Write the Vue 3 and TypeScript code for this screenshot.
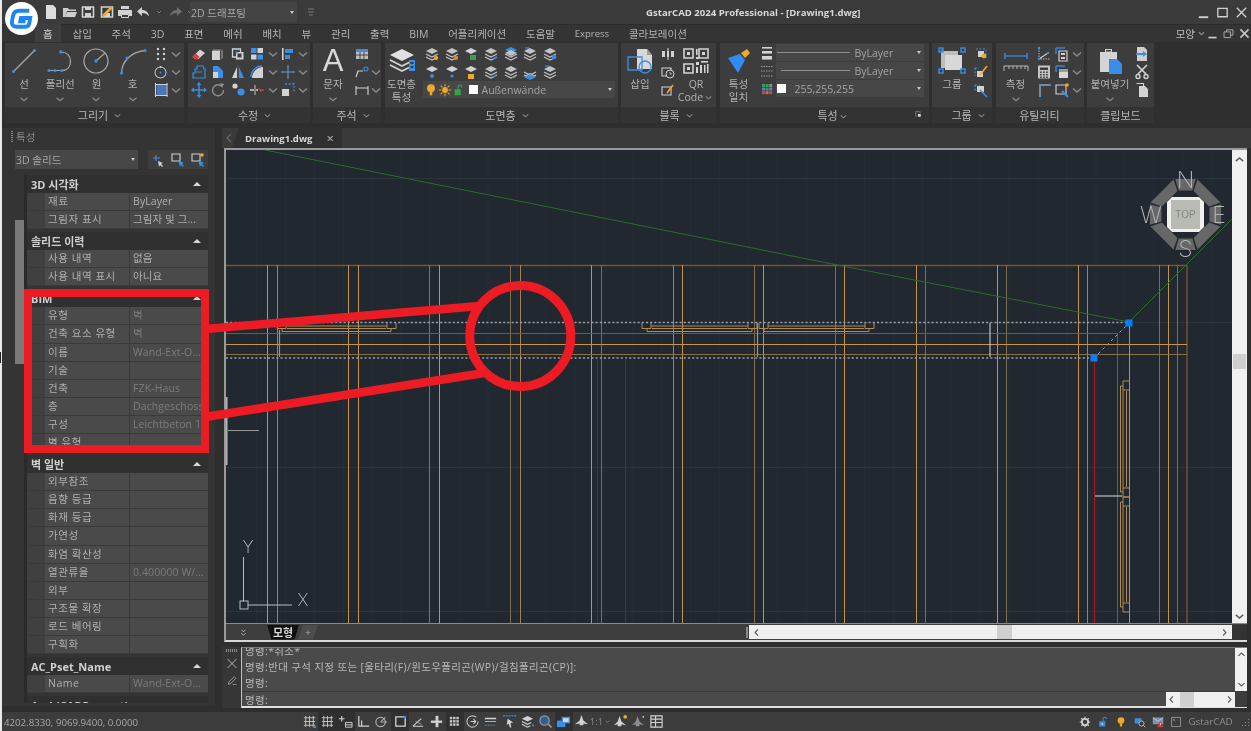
<template>
  <div class="app">
    <!-- title bar -->
    <div class="titlebar">
      <div class="quick">
        <svg v-for="(n, i) in quickIcons" :key="i" class="ico" :class="{ small: n === 'chevs' }" viewBox="0 0 16 16" v-html="ic[n]"></svg>
      </div>
      <div class="workspace"><span>2D 드래프팅</span><i class="tri"></i></div>
      <svg class="ico custom" viewBox="0 0 16 16" v-html="ic.custom"></svg>
      <div class="title">GstarCAD 2024 Professional - [Drawing1.dwg]</div>
      <div class="winbtns">
        <svg viewBox="0 0 16 16" v-html="ic.wmin"></svg>
        <svg viewBox="0 0 16 16" v-html="ic.wmax"></svg>
        <svg viewBox="0 0 16 16" v-html="ic.wclose"></svg>
      </div>
    </div>

    <!-- ribbon tabs -->
    <div class="tabs">
      <span v-for="(t, i) in tabs" :key="t" class="tab" :class="{ on: i === 0 }">{{ t }}</span>
      <div class="tabs-right">
        <span class="style-name">모양<svg class="mini" viewBox="0 0 16 16" v-html="ic.chevs"></svg></span>
        <svg viewBox="0 0 16 16" v-html="ic.wmin"></svg>
        <svg viewBox="0 0 16 16" v-html="ic.wrestore"></svg>
        <svg viewBox="0 0 16 16" v-html="ic.wclose2"></svg>
      </div>
    </div>

    <!-- ribbon -->
    <div class="ribbon">
      <section class="panel p-draw">
        <div class="body">
          <div v-for="b in drawTools" :key="b.label" class="big w36">
            <svg class="bigico" viewBox="0 0 28 28" v-html="ic[b.icon]"></svg>
            <span class="lbl">{{ b.label }}</span>
            <svg class="chev" viewBox="0 0 16 16" v-html="ic.chev"></svg>
          </div>
          <div class="grid cols-draw">
            <svg v-for="(n, i) in drawSmall" :key="i" class="ico" viewBox="0 0 16 16" v-html="ic[n]"></svg>
          </div>
        </div>
        <div class="cap">그리기<svg class="mini" viewBox="0 0 16 16" v-html="ic.chev"></svg></div>
      </section>

      <section class="panel p-mod">
        <div class="body">
          <div class="grid cols-mod">
            <svg v-for="(n, i) in modifyIcons" :key="i" class="ico" viewBox="0 0 16 16" v-html="ic[n]"></svg>
          </div>
        </div>
        <div class="cap">수정<svg class="mini" viewBox="0 0 16 16" v-html="ic.chev"></svg></div>
      </section>

      <section class="panel p-note">
        <div class="body">
          <div class="big w40">
            <span class="big-a">A</span>
            <span class="lbl">문자</span>
            <svg class="chev" viewBox="0 0 16 16" v-html="ic.chev"></svg>
          </div>
          <div class="grid cols-note">
            <svg v-for="(n, i) in noteIcons" :key="i" class="ico" viewBox="0 0 16 16" v-html="ic[n]"></svg>
          </div>
        </div>
        <div class="cap">주석<svg class="mini" viewBox="0 0 16 16" v-html="ic.chev"></svg></div>
      </section>

      <section class="panel p-layer">
        <div class="body">
          <div class="big w34">
            <svg class="bigico" viewBox="0 0 28 28" v-html="ic.layers"></svg>
            <span class="lbl">도면층<br />특성</span>
          </div>
          <div class="layer-right">
            <div class="grid cols-layer">
              <svg v-for="(n, i) in layerIcons" :key="i" class="ico" viewBox="0 0 16 16" v-html="ic[n]"></svg>
            </div>
            <div class="drop layer-drop">
              <svg class="ico" viewBox="0 0 16 16" v-html="ic.bulb"></svg>
              <svg class="ico" viewBox="0 0 16 16" v-html="ic.sun"></svg>
              <svg class="ico" viewBox="0 0 16 16" v-html="ic.lockg"></svg>
              <i class="swatch"></i>
              <span>Außenwände</span>
              <i class="tri"></i>
            </div>
          </div>
        </div>
        <div class="cap">도면층<svg class="mini" viewBox="0 0 16 16" v-html="ic.chev"></svg></div>
      </section>

      <section class="panel p-block">
        <div class="body">
          <div class="big w38">
            <svg class="bigico" viewBox="0 0 28 28" v-html="ic.insert"></svg>
            <span class="lbl">삽입</span>
          </div>
          <div class="grid cols-one">
            <svg v-for="n in blockIcons" :key="n" class="ico" viewBox="0 0 16 16" v-html="ic[n]"></svg>
          </div>
          <div class="big w38">
            <svg class="bigico" viewBox="0 0 28 28" v-html="ic.qr"></svg>
            <span class="lbl">QR<br />Code<svg class="mini" viewBox="0 0 16 16" v-html="ic.chev"></svg></span>
          </div>
        </div>
        <div class="cap">블록<svg class="mini" viewBox="0 0 16 16" v-html="ic.chev"></svg></div>
      </section>

      <section class="panel p-prop">
        <div class="body">
          <div class="big w38">
            <svg class="bigico" viewBox="0 0 28 28" v-html="ic.brush"></svg>
            <span class="lbl">특성<br />일치</span>
          </div>
          <div class="prop-rows">
            <div class="prop-row">
              <svg class="ico" viewBox="0 0 16 16" v-html="ic.lineweight"></svg>
              <div class="drop prop-drop"><i class="bar"></i><span>ByLayer</span><i class="tri"></i></div>
            </div>
            <div class="prop-row">
              <svg class="ico" viewBox="0 0 16 16" v-html="ic.linetype"></svg>
              <div class="drop prop-drop"><i class="bar short"></i><span>ByLayer</span><i class="tri"></i></div>
            </div>
            <div class="prop-row">
              <svg class="ico" viewBox="0 0 16 16" v-html="ic.palette"></svg>
              <div class="drop prop-drop">
                <i class="swatch"></i><span class="rgb">255,255,255</span><i class="tri"></i>
              </div>
            </div>
          </div>
        </div>
        <div class="cap cap-launch">
          <span>특성<svg class="mini" viewBox="0 0 16 16" v-html="ic.chev"></svg></span>
          <svg class="launch" viewBox="0 0 16 16" v-html="ic.launch"></svg>
        </div>
      </section>

      <section class="panel p-group">
        <div class="body">
          <div class="big w40">
            <svg class="bigico" viewBox="0 0 28 28" v-html="ic.group"></svg>
            <span class="lbl">그룹</span>
          </div>
          <div class="grid cols-one">
            <svg v-for="n in groupIcons" :key="n" class="ico" viewBox="0 0 16 16" v-html="ic[n]"></svg>
          </div>
        </div>
        <div class="cap">그룹<svg class="mini" viewBox="0 0 16 16" v-html="ic.chev"></svg></div>
      </section>

      <section class="panel p-util">
        <div class="body">
          <div class="big w40">
            <svg class="bigico" viewBox="0 0 28 28" v-html="ic.measure"></svg>
            <span class="lbl">측정</span>
            <svg class="chev" viewBox="0 0 16 16" v-html="ic.chev"></svg>
          </div>
          <div class="grid cols-util">
            <svg v-for="(n, i) in utilIcons" :key="i" class="ico" viewBox="0 0 16 16" v-html="ic[n]"></svg>
          </div>
        </div>
        <div class="cap plain">유틸리티</div>
      </section>

      <section class="panel p-clip">
        <div class="body">
          <div class="big w46">
            <svg class="bigico" viewBox="0 0 28 28" v-html="ic.paste"></svg>
            <span class="lbl">붙여넣기</span>
            <svg class="chev" viewBox="0 0 16 16" v-html="ic.chev"></svg>
          </div>
          <div class="grid cols-one">
            <svg v-for="n in clipIcons" :key="n" class="ico" viewBox="0 0 16 16" v-html="ic[n]"></svg>
          </div>
        </div>
        <div class="cap plain">클립보드</div>
      </section>
    </div>

    <!-- main area -->
    <div class="main">
      <aside class="palette">
        <div class="pal-head"><i class="grip"></i>특성</div>
        <div class="pal-select">
          <div class="drop sel"><span>3D 솔리드</span><i class="tri"></i></div>
          <div class="sel-btns">
            <svg v-for="n in selIcons" :key="n" class="ico" viewBox="0 0 16 16" v-html="ic[n]"></svg>
          </div>
        </div>
        <div class="pal-body">
          <div class="pal-scroll"><i></i></div>
          <div class="sections">
            <div v-for="s in sections" :key="s.title" class="sec">
              <div class="sec-head"><b>{{ s.title }}</b><i class="tri up"></i></div>
              <div v-for="r in s.rows" :key="r[0]" class="row">
                <span class="gut"></span>
                <span class="name">{{ r[0] }}</span>
                <span class="val" :class="{ lit: s.lit }">{{ r[1] }}</span>
              </div>
            </div>
          </div>
        </div>
      </aside>

      <div class="doc">
        <div class="doc-tabs">
          <svg class="back" viewBox="0 0 8 12"><path d="M6 2 2 6l4 4" fill="none" stroke="#666" stroke-width="1.2" /></svg>
          <div class="doc-tab"><b>Drawing1.dwg</b><span class="x">×</span></div>
        </div>

        <div class="frame">
          <div class="view">
            <svg class="drawing" viewBox="226 150 1006 473" width="1006" height="473">
              <rect x="226" y="150" width="1006" height="473" fill="#212830" />
              <path v-for="x in gridX" :key="'gx' + x" :d="`M${x} 150V623`" stroke="#262d37" stroke-width="1" />
              <path v-for="y in gridY" :key="'gy' + y" :d="`M226 ${y}H1232`" stroke="#2c343e" stroke-width="1" />

              <path d="M226 265.5H1187M1187 265V623" stroke="#80502c" stroke-width="1.4" fill="none" />
              <path v-for="l in uprights" :key="l[0]" :d="`M${l[0]} 265V623`" :stroke="l[1]" stroke-width="1" />

              <path d="M226 333.5H1117.5V623" stroke="#5c605c" stroke-width="1" fill="none" />
              <path d="M226 344.5H1187" stroke="#c49650" stroke-width="1" />
              <path d="M226 354.5H1187" stroke="#8a7048" stroke-width="1" />

              <path v-for="d in windowPaths" :key="d" :d="d" stroke="#b08c52" stroke-width="1" fill="none" />

              <path d="M226 322.5H1129M226 358H1094" stroke="#9aa0a8" stroke-width="1.3" stroke-dasharray="2 2.2" />
              <path d="M279.5 330V357M757.5 323V357" stroke="#8c96a2" stroke-width="1.2" />
              <path d="M990 323V357" stroke="#dcdcdc" stroke-width="1" />
              <path d="M597.5 358V623M625.5 358V623" stroke="#7c1d20" stroke-width="1" />
              <path d="M1094.5 358V623" stroke="#a81c1c" stroke-width="1" />
              <path d="M1129.5 323V623" stroke="#8f97a1" stroke-width="1" />
              <path d="M1095 496H1122" stroke="#dcdcdc" stroke-width="1" />

              <path d="M265 150 812 260 1129 322 1232 219" stroke="#2f6a2c" stroke-width="1" fill="none" />
              <path d="M1094 358 1129 323" stroke="#a0a0a0" stroke-width="1" stroke-dasharray="3 3" />
              <rect x="1125.5" y="319.5" width="7" height="7" fill="#0a7dff" />
              <rect x="1090.5" y="354.5" width="7" height="7" fill="#0a7dff" />

              <rect x="226" y="397" width="1.5" height="68" fill="#b4b4b4" />
              <path d="M228 430.5H259" stroke="#999" stroke-width="1" />

              <!-- ucs -->
              <path d="M243.5 557V601M248 605H292" stroke="#b8bcc0" stroke-width="1" fill="none" />
              <rect x="240" y="601" width="8" height="8" fill="none" stroke="#b8bcc0" stroke-width="1" />
              <text x="248" y="553" class="ucs">Y</text>
              <text x="303" y="606" class="ucs">X</text>

              <!-- view cube -->
              <polygon v-for="(pts, i) in cubeRing" :key="i" :points="pts" fill="#666867" />
              <polygon points="1172,197 1199,197 1204,202 1204,227 1199,232 1172,232 1167,227 1167,202" fill="#f0f0ec" />
              <rect x="1171" y="200" width="29" height="29" fill="#b8bab4" />
              <text x="1185.5" y="218" class="top">TOP</text>
              <text x="1185.5" y="188" class="card">N</text>
              <text x="1185.5" y="257" class="card">S</text>
              <text x="1151" y="223" class="card">W</text>
              <text x="1219" y="223" class="card">E</text>
            </svg>
            <div class="vscroll">
              <svg viewBox="0 0 16 16" v-html="ic.up"></svg>
              <i class="vthumb"></i>
              <svg viewBox="0 0 16 16" v-html="ic.down"></svg>
            </div>
          </div>

          <div class="layoutbar">
            <svg class="dbl" viewBox="0 0 16 16" v-html="ic.dbl"></svg>
            <span class="model">모형</span>
            <span class="plus">+</span>
            <i class="hgrip"></i>
            <div class="hscroll">
              <svg viewBox="0 0 16 16" v-html="ic.left"></svg>
              <i class="hthumb"></i>
              <svg viewBox="0 0 16 16" v-html="ic.right"></svg>
            </div>
            <i class="corner"></i>
          </div>
        </div>

        <div class="cmd">
          <div class="cmd-side">
            <i class="cmd-grip"></i>
            <svg viewBox="0 0 16 16" v-html="ic.cmdx"></svg>
            <svg viewBox="0 0 16 16" v-html="ic.pen"></svg>
          </div>
          <div class="cmd-box">
            <div class="cmd-log">
              <div class="cmd-lines">
                <div>명령:*취소*</div>
                <div>명령:반대 구석 지정 또는 [울타리(F)/윈도우폴리곤(WP)/걸침폴리곤(CP)]:</div>
                <div>명령:</div>
              </div>
              <div class="cmd-vs">
                <svg viewBox="0 0 16 16" v-html="ic.up"></svg>
                <svg viewBox="0 0 16 16" v-html="ic.down"></svg>
              </div>
            </div>
            <div class="cmd-input">
              <span>명령:</span>
              <div class="cmd-hs">
                <svg viewBox="0 0 16 16" v-html="ic.left"></svg>
                <i></i>
                <svg viewBox="0 0 16 16" v-html="ic.right"></svg>
              </div>
              <i class="cmd-corner"></i>
            </div>
          </div>
        </div>
      </div>
    </div>

    <!-- status bar -->
    <div class="status">
      <span class="coords">4202.8330, 9069.9400, 0.0000</span>
      <div class="st-icons">
        <span v-for="(s, i) in statusIcons" :key="i" class="st" :class="{ dark: s.dark, txt: s.text }">
          <template v-if="s.text">1:1<svg class="mini" viewBox="0 0 16 16" v-html="ic.chevs"></svg></template>
          <svg v-else viewBox="0 0 16 16" v-html="ic[s.icon as string]"></svg>
        </span>
      </div>
      <div class="st-right">
        <svg v-for="n in statusRight" :key="n" viewBox="0 0 16 16" v-html="ic[n]"></svg>
        <span>GstarCAD</span>
        <svg class="resize" viewBox="0 0 10 10"><path d="M8 2h1v1H8zM5 5h1v1H5zM8 5h1v1H8zM2 8h1v1H2zM5 8h1v1H5zM8 8h1v1H8z" fill="#8a8a8a" /></svg>
      </div>
    </div>

    <!-- logo over title bar and tabs -->
    <div class="logo">
      <svg viewBox="0 0 34 34">
        <path d="M25 9H14.5C11 9 9 11 8.3 14L7.2 20C6.6 23.5 8.4 25.5 11.6 25.5H20.5C23 25.5 24.6 24 25 22L26 16.5H16.5L15.8 20H21.2" fill="none" stroke="#1e86f0" stroke-width="4" />
      </svg>
    </div>

    <i class="edge-mark"></i>

    <!-- red callout drawn on top of the screenshot -->
    <svg class="callout" viewBox="0 0 1251 731" width="1251" height="731">
      <rect x="28" y="293" width="177" height="156" fill="none" stroke="#ed1c24" stroke-width="8" />
      <path d="M205 329 480 306M205 417 484 373" stroke="#ed1c24" stroke-width="8.5" fill="none" />
      <circle cx="520.3" cy="336" r="50.5" fill="none" stroke="#ed1c24" stroke-width="9" />
    </svg>
  </div>
</template>

<script setup lang="ts">
const W = "#d2d2d2";
const B = "#3a8ee6";
const Y = "#f0a92c";

const s = (d: string, c = W, w = 1.3) => `<path d="${d}" fill="none" stroke="${c}" stroke-width="${w}"/>`;
const f = (d: string, c = W) => `<path d="${d}" fill="${c}"/>`;
const dot = (x: number, y: number, r = 1.5, c = B) => `<circle cx="${x}" cy="${y}" r="${r}" fill="${c}"/>`;
const box = (x: number, y: number, w: number, h: number, c = W) =>
  `<rect x="${x}" y="${y}" width="${w}" height="${h}" fill="${c}"/>`;

const stack = (c = W) =>
  f("M8 2 14 5 8 8 2 5z", c) + s("M2 8l6 3 6-3M2 11l6 3 6-3", c, 1.2);

const ic: Record<string, string> = {
  // quick access
  doc: f("M3 1h7l3 3v11H3z", "#dcdcdc"),
  open: f("M1 4h5l1 1.5h7V7H5l-2 6H1z", "#cfcfcf") + f("M5 8h10l-2 5H3z", "#cfcfcf"),
  save: s("M2.5 3h11v10h-11z", W, 1.6) + box(5, 3, 6, 3) + box(5, 9, 6, 4),
  saveas: s("M2.5 3h11v10h-11z", W, 1.6) + box(5, 9, 6, 4) + s("M4 12 13 3", Y, 2.6),
  print: box(4, 2, 8, 3) + box(1, 6, 14, 6) + box(4, 10, 8, 4, "#3a3a3a") + s("M4.5 10.5h7v3h-7z", W, 1),
  undo: f("M6 3 1 7.5 6 12V9c3 0 5 .8 7 3.5C12.5 8.5 10 6 6 6z"),
  redo: f("M10 3l5 4.5L10 12V9c-3 0-5 .8-7 3.5C3.5 8.5 6 6 10 6z", "#6e6e6e"),
  chevs: s("M5 6.5 8 9.5 11 6.5", "#8a8a8a", 1.5),
  custom: s("M5 5h6M5 8h6", "#777", 1) + s("M6 11h4", "#777", 1),
  wmin: box(3, 12, 10, 2, "#d0d0d0"),
  wmax: s("M3 3.5h10v9H3z", "#d0d0d0", 1.4),
  wclose: s("M3 3 13 13M13 3 3 13", "#d0d0d0", 1.4),
  wclose2: s("M3 3 13 13M13 3 3 13", "#c4c4c4", 2),
  wrestore: s("M2.5 6h8v7h-8zM5.5 6V3.5h8V10h-3", "#a8a8a8", 1.2),
  chev: s("M4 6.5 8 10 12 6.5", "#8a8a8a", 1.5),
  // draw
  line: s("M3.5 24.5 24.5 3.5", "#a8a8a8", 1.2) + dot(3.5, 24.5, 1.6) + dot(24.5, 3.5, 1.6),
  poly: s("M3 23.5H16C22 23.5 24.5 19 24.5 14S21 5 15 5", "#a8a8a8", 1.2) + dot(3, 23.5, 1.6) + dot(9, 23.5, 1.6) + dot(16, 23.5, 1.6) + dot(15, 5, 1.8),
  circle: `<circle cx="14" cy="14" r="12" fill="none" stroke="#a8a8a8" stroke-width="1.2"/>` + s("M14 14 23 6", "#a8a8a8", 1.2) + dot(14, 14, 1.7),
  arc: s("M2.5 26C3 14 12 5 26 3.5", "#a8a8a8", 1.3) + dot(2.5, 26, 1.6) + dot(8, 11, 1.6) + dot(26, 3.5, 1.6),
  dots: [3, 8, 13].map((y) => dot(5, y, 1.2, W) + dot(11, y, 1.2, W)).join(""),
  circdot: `<circle cx="7.5" cy="8.5" r="5.5" fill="none" stroke="#bdbdbd" stroke-width="1.1"/>` + dot(7.5, 8.5, 1) + dot(7.5, 3, 1, W) + dot(13, 8.5, 1.2),
  hatch: box(3.5, 3, 10, 10, "#4778bf") + s("M2 2.5h12.5M2 13.5h12.5M2.5 1v14M14 1v14", W, 1),
  // modify
  eraser: f("M1.5 11 9 3.5l5 3.5-6.5 6H5z") + f("M1.5 11 5 7.5 8.5 11 6 13.5H4z", "#e23b3b"),
  solid: f("M2 5h8v9H2z") + f("M3 3.5h9L10 5H2z", "#8a8a8a") + f("M11 5l2-1.5v8L11 14z", "#777"),
  copyo: s("M2.5 3h8v8h-8z", W, 1.3) + box(6, 6, 7.5, 7.5, W) + box(7.5, 7.5, 4, 4, "#3c3c3c") + box(5.5, 5.5, 2, 2, B),
  four: box(2, 2, 5.5, 5, B) + box(8.5, 2, 5.5, 5, W) + box(2, 8.5, 5.5, 5, W) + box(8.5, 8.5, 5.5, 5, B),
  align: box(2, 2, 1.6, 12) + box(5, 3, 8, 4, B) + box(5, 9, 5, 4, B),
  stretch: s("M2 14V9h2V5h2V2h6l1 3h1v9zM5 8h6", B, 1.2),
  shape: f("M3 2h5l5 5v7H3z", B) + f("M3 8h5v6H3z", W),
  mirror: f("M7 3v11H2z", W) + f("M9 3v11h5z", B) + s("M8 1v14", "#666", .7),
  fillet: f("M14 3v11H3c0-6 5-11 11-11z") + s("M2 13C2 7 7 2 13 2", B, 1.3),
  trim: s("M8 1v14M1 8h14", "#888", 1) + dot(8, 8, 1.3) + dot(8, 3, 1) + dot(8, 13, 1) + dot(3, 8, 1) + dot(13, 8, 1),
  move: s("M8 1v14M1 8h14", B, 1.5) + f("M8 0 10.5 3h-5zM8 16l2.5-3h-5zM0 8l3-2.5v5zM16 8l-3-2.5v5z", B),
  rotate: s("M12 4.5A5.5 5.5 0 1 0 13.5 8", "#8e8e8e", 1.4) + f("M10 1l4 1-2 4z", "#8e8e8e"),
  scale: dot(5, 4, 2.6, W) + dot(11, 10, 3.6),
  brk: s("M1 8h4M7 8h2", W, 1.3) + s("M11 8h4", "#d04a4a", 1.3) + s("M6 3v10", W, .9) + s("M9.5 6l3 4", "#d04a4a", .9),
  dashbox: box(2, 7, 7, 7) + s("M5 2h9v9", B, 1.3).replace("/>", ' stroke-dasharray="2 1.6"/>'),
  // annotation
  table: box(2, 3, 12, 10, "#bfbfbf") + box(2, 3, 12, 3, B) + s("M2 9h12M6 6v7M10 6v7", "#3c3c3c", .9),
  leader: s("M2 13 4 7h5", W, 1.2) + `<circle cx="12" cy="5" r="2" fill="none" stroke="${B}" stroke-width="1.2"/>`,
  dim: s("M2 4v9M14 4v9M2 6h12", W, 1.1),
  blank: "",
  layers: f("M14 2 26 8 14 14 2 8z", "#e0e0e0") + s("M2 13l12 6 8-4M2 18l12 6 7-3.5", W, 1.8) + box(21, 13, 6, 11, B) + box(22.5, 15, 3, 2, "#3c3c3c") + box(22.5, 19, 3, 2, "#3c3c3c"),
  // layers small
  l1: stack("#c2c2c2") + dot(12, 12, 2, Y),
  l2: stack("#c2c2c2") + dot(12, 12, 2, "#e08a2a"),
  l3: f("M8 2 14 5 8 8 2 5z") + box(7, 9, 6, 5, "#37a04a"),
  l4: stack("#c2c2c2") + s("M10 13l4-2", B, 1.4),
  l5: f("M8 1 14 4 8 7 2 4z", B) + stack("#c2c2c2").replace("M8 2 14 5 8 8 2 5z", "M8 4 14 7 8 10 2 7z"),
  l6: s("M3 2h4", B, 1.2) + stack("#c2c2c2"),
  l7: stack("#c2c2c2") + dot(12, 11, 2.3),
  l8: f("M8 2 14 5 8 8 2 5z") + dot(8, 12, 2),
  l9: f("M8 2 14 5 8 8 2 5z") + dot(8, 12, 1.6),
  l10: f("M8 2 14 5 8 8 2 5z") + box(5, 10, 6, 5, Y),
  l11: stack("#c2c2c2") + s("M10 13l3-2", B, 1.3),
  l12: stack("#c2c2c2") + s("M9 14l4-1", "#37a04a", 1.2),
  l13: stack("#c2c2c2").replace("M8 2 14 5 8 8 2 5z", "M8 9 14 12 8 15 2 12z") + f("M8 10 14 13 8 16 2 13z", B),
  l14: s("M3 2h4", B, 1.2) + stack("#c2c2c2"),
  bulb: dot(8, 6, 4.5, Y) + box(6.5, 10, 3, 4, Y),
  sun: dot(8, 8, 3.3, Y) + s("M8 1v3M8 12v3M1 8h3M12 8h3M3 3l2 2M11 11l2 2M3 13l2-2M11 5l2-2", Y, 1.2),
  lockg: box(3, 7, 7, 7, "#37a04a") + s("M7 7V4c0-2 4-2 4 0v1", "#37a04a", 1.3),
  // block
  insert: f("M11 2h10l5 6v14H11z", "#d8d8d8") + f("M21 2l5 6h-5z", "#9c9c9c") + s("M2 10h14v13H2z", B, 1.3) + `<circle cx="19" cy="20" r="6" fill="none" stroke="${B}" stroke-width="1.3"/>`,
  bk1: s("M8 2v12", W, 1) + box(2, 5, 3, 6) + box(11, 5, 3, 6) + box(7, 5, 2, 6),
  bk2: s("M2 4h9v8H2z", W, 1.1) + `<circle cx="10" cy="10" r="4" fill="#3c3c3c" stroke="${W}" stroke-width="1"/>` + s("M10 8v2h2", W, .8),
  bk3: s("M2 5h9v8H2z", W, 1.1) + s("M7 11 13 3", Y, 1.5),
  qr: s("M2 2h9v9H2zM17 2h9v9h-9zM2 17h9v9H2z", W, 1.6) + box(5, 5, 3, 3) + box(20, 5, 3, 3) + box(5, 20, 3, 3) + box(14, 2, 1.6, 6) + box(14, 10, 3, 2) + box(19, 14, 7, 1.6) + box(14, 15, 3, 3) + box(14, 20, 2, 6) + box(18, 18, 2, 8) + box(22, 18, 1.5, 8) + box(25, 17, 1.5, 9),
  // properties
  brush: f("M16 6l6-4 3 4-5 5z", Y) + f("M3 11l12-4 5 6-7 13z", "#2f8cf2"),
  lineweight: box(3, 2, 10, 1.6) + box(3, 6, 10, 2.6) + box(3, 11, 10, 3.6),
  linetype: s("M2 3.5h12M2 8h12M2 13h12", "#9c9c9c", 1.1).replace("/>", ' stroke-dasharray="1.5 1"/>'),
  palette: [0, 1, 2].map((r) => [0, 1, 2].map((c) => box(3 + c * 3.6, 3 + r * 3.6, 3, 3, [["#3f9a55", "#3f9a55", "#8a8a8a"], ["#5b7fd0", "#3f9a55", "#5b7fd0"], ["#c94a4a", "#d06a6a", "#c94a4a"]][r][c])).join("")).join(""),
  launch: s("M3 3h8v2M3 3v8h2", "#a8a8a8", 1) + box(7, 7, 5, 5, "#d8d8d8"),
  // group
  group: box(3, 4, 17, 17, "#bdbdbd") + box(7, 8, 17, 15, "#d8d8d8") + s("M3 3h3M3 3v3", B, 1) + [[3, 3], [25, 3], [3, 24], [25, 24]].map(([x, y]) => `<rect x="${x - 2}" y="${y - 2}" width="4" height="4" fill="none" stroke="${B}" stroke-width="1.4"/>`).join(""),
  gr1: s("M3 3h10v9", B, 1).replace("/>", ' stroke-dasharray="2 1.5"/>') + box(5, 5, 6, 6) + dot(11, 10, 2.4, Y),
  gr2: s("M2 4h4M2 4v8", B, 1.2).replace("/>", ' stroke-dasharray="2 1.5"/>') + box(4, 7, 6, 6) + s("M7 11 14 2", Y, 1.6),
  gr3: s("M2 3h5M2 3v6", B, 1.2).replace("/>", ' stroke-dasharray="2 1.5"/>') + box(4, 4, 7, 6) + s("M7 8l7 7", B, 1.6),
  // utility
  measure: s("M3 6v6M25 6v6", B, 1.4) + s("M3 9h22", B, 1.2) + s("M2 19h24M2 19v5M26 19v5M7 19v3M11 19v3M15 19v3M19 19v3M23 19v3", "#b8b8b8", 1),
  angle: s("M3 2v11h11", "#b8b8b8", 1).replace("/>", ' stroke-dasharray="1.5 1"/>') + s("M3 13 12 7", W, 1.1) + dot(3, 13, 1.3) + dot(3, 2, 1.2) + dot(12, 7, 1.2),
  listbox: s("M2 2h9", B, 1.3) + s("M2 2v6", B, 1.3) + s("M5 5h8v10H5z", W, 1.2) + box(7, 7, 4, 2) + box(7, 11, 4, 2),
  calc: box(2, 1.5, 12, 13, "#c4c4c4") + box(4, 3.5, 8, 2.5, "#3c3c3c") + [7.5, 10, 12.5].map((y) => box(4, y, 1.8, 1.4, "#3c3c3c") + box(7, y, 1.8, 1.4, "#3c3c3c") + box(10, y, 1.8, 1.4, "#3c3c3c")).join(""),
  area: s("M2 2h9", B, 1.3) + s("M2 2v6", B, 1.3) + box(5, 5, 9, 9, "#d8d8d8") + box(5, 5, 9, 3, "#9c9c9c"),
  radius: s("M4 14V3h10", W, 1) + dot(4, 14, 1.3) + dot(4, 3, 1.2) + dot(14, 3, 1.2),
  qselect: s("M2 3h10v9H2z", W, 1.1) + dot(13, 3, 1.8, Y) + s("M8 9l6 6", B, 2),
  // clipboard
  paste: box(4, 5, 17, 20, "#d4d4d4") + box(9, 2, 7, 5, "#d4d4d4") + box(10, 3, 5, 1.5, "#3c3c3c") + f("M13 12h8l5 5v10H13z", "#3a8ee6"),
  clip1: f("M3 1h7l3 3v11H3z", "#cfcfcf") + s("M2 8h9", B, 2) + f("M9 5l4 3-4 3z", B),
  cut: s("M3 1l9 9M13 1l-9 9", W, 1.7) + `<circle cx="4" cy="12.5" r="2" fill="none" stroke="${W}" stroke-width="1.4"/><circle cx="12" cy="12.5" r="2" fill="none" stroke="${W}" stroke-width="1.4"/>`,
  cpy: s("M2.5 1.5h7v11", W, 1.2) + f("M5 4h6l3 3v8H5z"),
  // palette select buttons
  sel1: s("M3 6h7M6 3v6", B, 1.2) + f("M8 9l5 2-2 1 2 2-1 1-2-2-1 2z"),
  sel2: s("M2 2h8v7H2z", W, 1.1) + f("M8 8l6 3-2 1 2 2-1 1-2-2-1 2z", B),
  sel3: s("M2 2h8v7H2z", W, 1.1) + dot(12, 3, 1.8, Y) + f("M8 8l6 3-2 1 2 2-1 1-2-2-1 2z", B),
  // scroll
  up: s("M3.5 10 8 6l4.5 4", "#5c5c5c", 1.8),
  down: s("M3.5 6 8 10l4.5-4", "#5c5c5c", 1.8),
  left: s("M10 3.5 6 8l4 4.5", "#5c5c5c", 1.8),
  right: s("M6 3.5 10 8l-4 4.5", "#5c5c5c", 1.8),
  dbl: s("M5 4 8 7l3-3M5 9l3 3 3-3", "#c8c8c8", 1.2),
  cmdx: s("M2 2 14 14M14 2 2 14", "#bdbdbd", 1.2),
  pen: s("M3 13 4 9.5 11 3l2 2-6.5 7z", "#a8a8a8", 1.1) + box(9, 13, 5, 1, "#a8a8a8"),
  // status
  sg1: s("M4 2v12M8 2v12M12 2v12M2 4h12M2 8h12M2 12h12", "#c4c4c4", 1) + box(12, 13, 3, 2, B),
  sg2: s("M4 2v12M8 2v12M12 2v12M2 4h12M2 8h12M2 12h12", "#c4c4c4", 1),
  sg3: s("M4 2v6M1 5h6", W, 1.2) + s("M8 9h7v5H8zM8 11.5h7", W, 1),
  sg4: s("M3 2v11h11M6 7v6", W, 1.3),
  sg5: `<circle cx="7" cy="8.5" r="5" fill="none" stroke="#aaa" stroke-width="1.3"/>` + s("M7 8.5h7M7 8.5l5-5", "#aaa", 1.2),
  sg6: s("M3 3h10v10H3z", W, 1.4) + box(11.5, 2, 2.5, 2.5, B),
  sg7: s("M2 13h11M2 13l9-8", W, 1.2) + s("M5 8l6 3", "#aaa", 1),
  sg8: box(2, 7, 12, 2.5) + box(7, 2, 3, 12),
  sg9: [3, 6.5, 10].map((y) => [3, 6.5, 10].map((x) => box(x, y, 2.6, 2.6, "#c4c4c4")).join("")).join(""),
  sg10: s("M12 3.5A6 6 0 1 0 14 8", "#bbb", 1.2) + s("M6 8h6M9 5.5 11.5 8 9 10.5", W, 1.1),
  sg11: box(2, 4, 12, 1.6) + s("M2 8h12", "#bbb", 1) + s("M2 12h12", B, 1).replace("/>", ' stroke-dasharray="2 1"/>'),
  sg12: s("M1 2h14", B, 1.2).replace("/>", ' stroke-dasharray="2 1"/>') + f("M6 5l6 4-3 .5L10 14l-1.5.5L7 10l-2 2z"),
  sg13: f("M8 2 14 5 8 8 2 5z") + s("M2 8l6 3 4-2M2 11l6 3 3-1.5", W, 1.1) + dot(14, 12, 1.2),
  sg14: `<circle cx="7" cy="7" r="5" fill="#2f5d94" stroke="#9c9c9c" stroke-width="1.2"/>` + s("M11 11l3.5 3.5", "#9c9c9c", 1.6),
  sg15: box(1, 7, 9, 7, "#3a8ee6") + box(6, 3, 9, 7, "#3a8ee6") + box(7.5, 4.5, 6, 4, "#d8d8d8"),
  anno: f("M8 1l2 6 5 4-5-1v2H6v-2l-5 1 5-4z"),
  anno2: f("M7 2l2 6 5 4-5-1v2H5v-2l-4 1 4-4z") + dot(13, 3, 2, Y),
  anno3: f("M7 2l2 6 5 4-5-1v2H5v-2l-4 1 4-4z", "#8e8e8e") + dot(13, 3, 1, "#cfcfcf"),
  props: s("M2 2h12v12H2zM2 5.5h12M2 9h12M7 2v12", W, 1.2),
  // status right
  gear: `<circle cx="8" cy="8" r="4.2" fill="none" stroke="#cfcfcf" stroke-width="2.6"/>` + s("M8 1v2M8 13v2M1 8h2M13 8h2M3 3l1.5 1.5M11.5 11.5 13 13M3 13l1.5-1.5M11.5 4.5 13 3", "#cfcfcf", 1.6),
  lockb: box(3, 7, 8, 7, B) + s("M8 7V4c0-2.5 5-2.5 5 0", B, 1.4) + box(6, 9.5, 2, 2, "#cfe0f5"),
  bulb2: dot(8, 6, 4.4, Y) + box(6.5, 10, 3, 4, Y),
  find: box(1, 3, 9, 7, B) + `<circle cx="10" cy="10" r="3.4" fill="#3c3c3c" stroke="#bbb" stroke-width="1.2"/>` + s("M12.5 12.5 15 15", "#bbb", 1.3),
  alert: box(1, 2, 14, 9, "#7c93b4") + s("M1 2l7 5 7-5", W, 1) + f("M11 7l4.5 8h-9z", "#e2302a") + box(10.6, 9.5, .9, 3, "#fff"),
  full: s("M2 2h12v12H2z", "#8e8e8e", 1.3) + s("M4.5 4.5l2.5 2.5M4.5 4.5h2M4.5 4.5v2", "#8e8e8e", 1),
};

const quickIcons = ["doc", "open", "save", "saveas", "print", "undo", "chevs", "redo", "chevs"];

const tabs = ["홈", "삽입", "주석", "3D", "표면", "메쉬", "배치", "뷰", "관리", "출력", "BIM", "어플리케이션", "도움말", "Express", "콜라보레이션"];

const drawTools = [
  { label: "선", icon: "line" },
  { label: "폴리선", icon: "poly" },
  { label: "원", icon: "circle" },
  { label: "호", icon: "arc" },
];
const drawSmall = ["dots", "chev", "circdot", "chev", "hatch", "chev"];
const modifyIcons = [
  "eraser", "solid", "copyo", "four", "chev", "align", "chev",
  "stretch", "shape", "mirror", "fillet", "chev", "trim", "chev",
  "move", "rotate", "scale", "brk", "chev", "dashbox", "chev",
];
const noteIcons = ["table", "blank", "leader", "chev", "dim", "chev"];
const layerIcons = ["l1", "l2", "l3", "l4", "l5", "l6", "l7", "l8", "l9", "l10", "l11", "l12", "l13", "l14"];
const blockIcons = ["bk1", "bk2", "bk3"];
const groupIcons = ["gr1", "gr2", "gr3"];
const utilIcons = ["angle", "listbox", "chev", "calc", "area", "chev", "radius", "qselect", "chev"];
const clipIcons = ["clip1", "cut", "cpy"];
const selIcons = ["sel1", "sel2", "sel3"];

const sections: { title: string; lit?: boolean; rows: string[][] }[] = [
  { title: "3D 시각화", lit: true, rows: [["재료", "ByLayer"], ["그림자 표시", "그림자 및 그..."]] },
  { title: "솔리드 이력", lit: true, rows: [["사용 내역", "없음"], ["사용 내역 표시", "아니요"]] },
  {
    title: "BIM",
    rows: [["유형", "벽"], ["건축 요소 유형", "벽"], ["이름", "Wand-Ext-O..."], ["기술", ""], ["건축", "FZK-Haus"], ["층", "Dachgeschoss"], ["구성", "Leichtbeton 1.."], ["벽 유형", ""]],
  },
  {
    title: "벽 일반",
    rows: [["외부참조", ""], ["음향 등급", ""], ["화재 등급", ""], ["가연성", ""], ["화염 확산성", ""], ["열관류율", "0.400000 W/..."], ["외부", ""], ["구조물 확장", ""], ["로드 베어링", ""], ["구획화", ""]],
  },
  { title: "AC_Pset_Name", rows: [["Name", "Wand-Ext-O..."]] },
  { title: "ArchiCADProperties", rows: [] },
];

const statusIcons: { icon?: string; dark?: boolean; text?: boolean }[] = [
  { icon: "sg1" }, { icon: "sg2", dark: true }, { icon: "sg3", dark: true }, { icon: "sg4" }, { icon: "sg5" },
  { icon: "sg6", dark: true }, { icon: "sg7" }, { icon: "sg8" }, { icon: "sg9", dark: true }, { icon: "sg10" },
  { icon: "sg11" }, { icon: "sg12" }, { icon: "sg13" }, { icon: "sg14" }, { icon: "sg15", dark: true },
  { icon: "anno" }, { text: true }, { icon: "anno2" }, { icon: "anno3" }, { icon: "props" },
];
const statusRight = ["gear", "lockb", "bulb2", "find", "alert", "full"];

// drawing data, in page coordinates
const BRIGHT = "#c2924e";
const MID = "#a3824f";
const DIM = "#7f7052";
const uprights: [number, string][] = [
  [267.5, BRIGHT], [277.5, MID], [348.5, BRIGHT], [358.5, BRIGHT], [429.5, DIM], [439.5, BRIGHT],
  [510.5, DIM], [520.5, MID], [591.5, BRIGHT], [601.5, DIM], [673.5, MID], [682.5, BRIGHT],
  [754.5, DIM], [763.5, BRIGHT], [835.5, DIM], [844.5, BRIGHT], [916.5, BRIGHT], [925.5, DIM],
  [997.5, BRIGHT], [1006.5, DIM], [1078.5, BRIGHT], [1087.5, MID], [1159.5, DIM], [1168.5, BRIGHT], [1177.5, DIM],
];
const gridX = Array.from({ length: 35 }, (_, i) => 227.5 + i * 28.95);
const gridY = [178.5, 322.5, 467.5, 611.5];

const hWin = (a: number, b: number) =>
  `M${a} 323V328.5H${a + 9}V323M${b} 323V328.5H${b - 9}V323M${a + 5} 328.5V331.5H${b - 5}V328.5M${a + 9} 326H${b - 9}M${a + 10} 328.5H${b - 10}`;
const vWin = (a: number, b: number) =>
  `M1129 ${a}H1123V${a + 9}H1129M1129 ${b}H1123V${b - 9}H1129M1123 ${a + 5}H1120.5V${b - 5}H1123M1123 ${a + 9}V${b - 9}M1126.5 ${a + 10}V${b - 10}`;
const windowPaths = [hWin(277, 396), hWin(642, 757), hWin(759, 874), vWin(381, 497), vWin(497, 612)];

// view cube ring, eight segments around the cube face
const cubeRing = Array.from({ length: 8 }, (_, i) => {
  const mid = i * 45;
  const half = i % 2 ? 26 : 16;
  const pt = (r: number, deg: number) => {
    const a = (deg * Math.PI) / 180;
    return `${(1185.5 + r * Math.sin(a)).toFixed(1)},${(214.5 - r * Math.cos(a)).toFixed(1)}`;
  };
  return [pt(37, mid - half), pt(37, mid + half), pt(25, mid + half), pt(25, mid - half)].join(" ");
});
</script>

<style scoped>
.app {
  position: relative;
  width: 1251px;
  height: 731px;
  overflow: hidden;
  display: flex;
  flex-direction: column;
  padding-left: 2px;
  box-sizing: border-box;
  background: #e8e8e8;
  color: #bcbcbc;
  font-family: "Open Sans", "Noto Sans CJK KR", sans-serif;
  font-size: 10.5px;
  filter: blur(0.4px);
}
svg {
  display: block;
  overflow: visible;
}
i {
  display: block;
}

.titlebar {
  height: 24px;
  flex: none;
  display: flex;
  align-items: center;
  background: #3b3b3b;
  padding-left: 41px;
  position: relative;
}
.quick {
  display: flex;
  align-items: center;
  gap: 2.5px;
}
.ico {
  width: 16px;
  height: 16px;
}
.quick .ico.small {
  width: 10px;
}
.workspace {
  width: 107px;
  height: 20px;
  margin-left: -5px;
  padding: 0 3px 0 1px;
  box-sizing: border-box;
  display: flex;
  align-items: center;
  justify-content: space-between;
  background: #444;
  color: #a8a8a8;
}
.tri {
  width: 0;
  height: 0;
  border-left: 2px solid transparent;
  border-right: 2px solid transparent;
  border-top: 3px solid #c8c8c8;
  flex: none;
}
.tri.up {
  border-top: 0;
  border-left-width: 4px;
  border-right-width: 4px;
  border-bottom: 4px solid #d8d8d8;
}
.custom {
  margin-left: 6px;
}
.title {
  margin-left: 327px;
  color: #d8d8d8;
  font-size: 9.6px;
  font-weight: 700;
  white-space: nowrap;
}
.winbtns {
  margin-left: auto;
  display: flex;
  gap: 4px;
  padding-right: 2px;
}
.winbtns svg {
  width: 15px;
  height: 15px;
}

.tabs {
  height: 18px;
  flex: none;
  display: flex;
  align-items: center;
  gap: 19.8px;
  padding-left: 41px;
  background: #343434;
  border-top: 1px solid #2c2c2c;
  box-sizing: border-box;
}
.tab {
  color: #b4b4b4;
  white-space: nowrap;
}
.tab.on {
  color: #d0d0d0;
  padding: 3px 8px 4px;
  margin: -3px -8px -4px;
  background: #3e3e3e;
}
.tab:nth-child(14) {
  font-size: 9.5px;
}
.tabs-right {
  margin-left: auto;
  display: flex;
  align-items: center;
  gap: 3px;
}
.tabs-right svg {
  width: 13px;
  height: 13px;
}
.style-name {
  display: flex;
  align-items: center;
  margin-right: -5px;
}
.mini {
  display: inline-block;
  width: 11px;
  height: 11px;
  vertical-align: -2px;
}

.ribbon {
  height: 82px;
  flex: none;
  display: flex;
  padding: 1px 0 0 3px;
  gap: 3.5px;
  background: #2f2f2f;
  box-sizing: border-box;
}
.panel {
  height: 80px;
  display: flex;
  flex-direction: column;
  background: #333;
  flex: none;
}
.body {
  height: 64px;
  display: flex;
  background: #3d3d3d;
}
.cap {
  flex: 1;
  display: flex;
  align-items: center;
  justify-content: center;
  gap: 4px;
  padding-left: 14px;
  color: #b8b8b8;
  font-size: 11px;
}
.cap.plain {
  padding-left: 0;
}
.p-draw { width: 179px; }
.p-draw .body { padding-left: 1px; }
.p-draw .cap { padding-left: 12px; }
.p-mod { width: 122px; }
.p-note { width: 68px; }
.p-layer { width: 233px; }
.p-block { width: 95px; }
.p-block .cap { padding-left: 17px; }
.p-prop { width: 209px; }
.p-prop .cap { padding-left: 18px; }
.p-group { width: 60px; }
.p-util { width: 88px; }
.p-clip { width: 67px; }

.big {
  display: flex;
  flex-direction: column;
  align-items: center;
  flex: none;
  padding-top: 4px;
  box-sizing: border-box;
}
.w34 { width: 34px; }
.w36 { width: 36.2px; }
.w38 { width: 38px; }
.w40 { width: 40px; }
.w46 { width: 46px; }
.bigico {
  width: 28px;
  height: 28px;
  flex: none;
}
.big-a {
  height: 28px;
  font-family: "Liberation Sans", sans-serif;
  font-size: 31px;
  line-height: 28px;
  color: #d8d8d8;
}
.lbl {
  margin-top: 3px;
  line-height: 13px;
  text-align: center;
  white-space: nowrap;
  color: #b4b4b4;
}
.chev {
  width: 14px;
  height: 14px;
  margin-top: 1px;
}

.grid {
  display: grid;
  align-content: start;
  grid-auto-rows: 18px;
  align-items: center;
  justify-items: center;
  padding-top: 2px;
}
.cols-draw {
  grid-template-columns: 17px 13px;
  margin-left: 2px;
}
.cols-mod {
  grid-template-columns: 19px 19px 20px 18px 15px 15px 15px;
  margin-left: 2px;
}
.cols-note {
  grid-template-columns: 18px 10px;
}
.cols-one {
  grid-template-columns: 18px;
}
.cols-util {
  grid-template-columns: 17px 18px 13px;
}
.cols-layer {
  grid-template-columns: repeat(7, 19.6px);
}
.layer-right {
  margin-left: 4px;
  display: flex;
  flex-direction: column;
}
.drop {
  display: flex;
  align-items: center;
  background: #474747;
  box-sizing: border-box;
  color: #a4a4a4;
}
.layer-drop {
  width: 192px;
  height: 17px;
  gap: 0;
  padding-left: 1px;
}
.layer-drop .ico {
  width: 14px;
  height: 14px;
}
.layer-drop .swatch {
  margin-left: 3px;
}
.layer-drop span {
  margin-left: 4px;
}
.swatch {
  width: 9px;
  height: 9px;
  background: #fff;
  flex: none;
}
.drop .tri {
  margin-left: auto;
  margin-right: 3px;
}
.prop-rows {
  padding-top: 1px;
  display: flex;
  flex-direction: column;
  gap: 1px;
}
.prop-row {
  display: flex;
  align-items: center;
  height: 17px;
  padding-left: 1px;
  gap: 1px;
}
.prop-drop {
  width: 148px;
  height: 17px;
  padding-left: 1px;
}
.bar {
  width: 73px;
  height: 1px;
  background: #8e8e8e;
  margin-right: 5px;
}
.bar.short {
  width: 69px;
  margin-left: 4px;
}
.rgb {
  margin-left: 9px;
}
.cap-launch {
  position: relative;
}
.launch {
  position: absolute;
  right: 6px;
  top: 3px;
  width: 9px;
  height: 9px;
}

.main {
  flex: 1;
  min-height: 0;
  display: flex;
  gap: 7px;
  padding-top: 4px;
  padding-bottom: 4px;
  background: #2e2e2e;
}
.palette {
  width: 213px;
  display: flex;
  flex-direction: column;
  background: #343434;
  flex: none;
  margin-bottom: 2px;
}
.pal-head {
  height: 16px;
  display: flex;
  align-items: center;
  padding-left: 9px;
  gap: 3px;
  color: #8a8a8a;
}
.grip {
  width: 2px;
  height: 11px;
  background: repeating-linear-gradient(#8a8a8a 0 1px, transparent 1px 2px);
}
.pal-select {
  display: flex;
  gap: 10px;
  margin: 6px 0 6px 13px;
  height: 19px;
}
.sel {
  width: 123px;
  padding-left: 1px;
  background: #474747;
}
.sel-btns {
  width: 60px;
  display: flex;
  align-items: center;
  justify-content: space-around;
  background: #3e3e3e;
}
.pal-body {
  flex: 1;
  min-height: 0;
  display: flex;
  margin-bottom: 3px;
  padding-left: 13px;
}
.pal-scroll {
  width: 9px;
  padding-top: 45px;
  border-right: 3px solid #2a2a2a;
  flex: none;
}
.pal-scroll i {
  height: 144px;
  background: #7a7a7a;
}
.sections {
  width: 181px;
  overflow: hidden;
  display: flex;
  flex-direction: column;
  gap: 3px;
}
.sec {
  flex: none;
}
.sec-head {
  height: 18px;
  display: flex;
  align-items: center;
  justify-content: space-between;
  padding: 0 7px 0 4px;
  background: #303030;
  color: #d0d0d0;
  font-size: 11px;
}
.row {
  height: 18.1px;
  display: flex;
  box-sizing: border-box;
  border-bottom: 1px solid #3a3a3a;
  line-height: 17px;
  background: #4a4a4a;
  white-space: nowrap;
}
.gut {
  width: 18px;
  background: #404040;
  flex: none;
}
.name {
  width: 85px;
  padding-left: 3px;
  box-sizing: border-box;
  flex: none;
  border-right: 1px solid #3a3a3a;
  color: #b0b0b0;
  letter-spacing: 0.55px;
}
.val {
  padding-left: 3px;
  color: #7c7c7c;
  overflow: hidden;
  letter-spacing: 0.1px;
}
.val.lit {
  color: #b0b0b0;
}

.doc {
  flex: 1;
  min-width: 0;
  display: flex;
  flex-direction: column;
}
.doc-tabs {
  height: 20px;
  display: flex;
  align-items: center;
  background: #3a3a3a;
  flex: none;
}
.back {
  width: 8px;
  height: 12px;
  margin-left: 3px;
}
.doc-tab {
  margin-left: -1px;
  padding: 0 8px 0 13px;
  width: 110px;
  height: 20px;
  box-sizing: border-box;
  display: flex;
  align-items: center;
  justify-content: space-between;
  background: #303030;
  color: #d8d8d8;
  clip-path: polygon(7px 0, 100% 0, 100% 100%, 0 100%);
}
.doc-tab b {
  font-weight: 700;
  font-size: 9.5px;
}
.doc-tab .x {
  font-size: 13px;
  color: #b8b8b8;
}
.frame {
  margin: 0 4px 0 2px;
  border: 2px solid #9a9a9a;
  border-right: 0;
  border-bottom-color: #d8d8d8;
  flex: none;
}
.view {
  display: flex;
  height: 473px;
}
.drawing {
  flex: none;
}
.ucs {
  font-family: Inter, "Liberation Sans", sans-serif;
  font-size: 17px;
  font-weight: 200;
  fill: #b8bcc0;
  text-anchor: middle;
}
.card {
  font-family: Inter, "Liberation Sans", sans-serif;
  font-size: 23px;
  font-weight: 200;
  fill: #b4b6b4;
  text-anchor: middle;
}
.top {
  font-family: "Liberation Sans", sans-serif;
  font-size: 10px;
  fill: #858780;
  text-anchor: middle;
}
.vscroll {
  width: 15px;
  background: #f0f0f0;
  display: flex;
  flex-direction: column;
  align-items: center;
  padding-top: 3px;
  box-sizing: border-box;
}
.vscroll svg {
  width: 13px;
  height: 13px;
  flex: none;
}
.vthumb {
  width: 13px;
  height: 15px;
  background: #cfcfcf;
  margin-top: 188px;
  margin-bottom: auto;
}
.layoutbar {
  height: 17px;
  display: flex;
  align-items: center;
  background: #3e3e3e;
  border-top: 1px solid #8a8a8a;
  box-sizing: border-box;
}
.dbl {
  width: 11px;
  height: 11px;
  margin-left: 12px;
}
.model {
  margin-left: 18px;
  width: 32px;
  height: 15px;
  line-height: 15px;
  text-align: center;
  background: #111;
  color: #d8d8d8;
  clip-path: polygon(0 0, 100% 0, 86% 100%, 14% 100%);
  font-size: 11px;
  font-weight: 700;
}
.plus {
  margin-left: -1px;
  width: 20px;
  height: 15px;
  line-height: 15px;
  text-align: center;
  color: #a8a8a8;
  background: #4c4c4c;
  clip-path: polygon(25% 0, 100% 0, 75% 100%, 0 100%);
}
.hgrip {
  margin-left: auto;
  width: 2px;
  height: 11px;
  background: #8a8a8a;
  margin-right: 1px;
}
.hscroll {
  width: 483px;
  height: 14px;
  display: flex;
  align-items: center;
  justify-content: space-between;
  background: #efefef;
  padding: 0 2px;
  box-sizing: border-box;
  position: relative;
}
.hscroll svg {
  width: 11px;
  height: 11px;
}
.hthumb {
  position: absolute;
  left: 248px;
  top: 0;
  width: 15px;
  height: 14px;
  background: #cfcfcf;
}
.corner {
  width: 15px;
  height: 15px;
  background: #333;
}

.cmd {
  margin-top: 5px;
  flex: 1;
  min-height: 0;
  display: flex;
  margin-right: 4px;
}
.cmd-side {
  width: 19px;
  padding: 2px 0 0 4px;
  box-sizing: border-box;
  display: flex;
  flex-direction: column;
  gap: 1px;
  background: #363636;
}
.cmd-side svg {
  width: 12px;
  height: 13px;
  margin-bottom: 3px;
}
.cmd-grip {
  width: 12px;
  height: 3px;
  margin-bottom: 4px;
  background: repeating-linear-gradient(90deg, #8a8a8a 0 1px, transparent 1px 2px);
}
.cmd-box {
  flex: 1;
  display: flex;
  flex-direction: column;
  background: #4a4a4a;
  border-top: 1px solid #7c7c7c;
  border-left: 1px solid #c0c0c0;
  border-bottom: 2px solid #e0e0e0;
  min-width: 0;
}
.cmd-log {
  height: 44px;
  display: flex;
  border-bottom: 1px solid #3a3a3a;
  flex: none;
  box-sizing: border-box;
}
.cmd-lines {
  flex: 1;
  min-width: 0;
  overflow: hidden;
  display: flex;
  flex-direction: column;
  justify-content: flex-end;
  padding-left: 3px;
  line-height: 16px;
  font-size: 10.5px;
  letter-spacing: 0.35px;
  white-space: pre;
  color: #b8b8b8;
}
.cmd-lines div {
  flex: none;
}
.cmd-vs {
  width: 12px;
  background: #f0f0f0;
  display: flex;
  flex-direction: column;
  align-items: center;
  justify-content: space-between;
  padding: 1px 0;
}
.cmd-vs svg {
  width: 11px;
  height: 11px;
}
.cmd-input {
  flex: 1;
  display: flex;
  align-items: center;
  padding-left: 3px;
  letter-spacing: 0.35px;
  color: #b8b8b8;
}
.cmd-hs {
  margin-left: auto;
  width: 69px;
  height: 100%;
  display: flex;
  align-items: center;
  justify-content: space-between;
  background: #f0f0f0;
  position: relative;
}
.cmd-hs svg {
  width: 11px;
  height: 11px;
}
.cmd-hs i {
  position: absolute;
  left: 14px;
  top: 0;
  bottom: 0;
  width: 14px;
  background: #cfcfcf;
}
.cmd-corner {
  width: 12px;
  height: 100%;
  background: #3c3c3c;
}

.status {
  height: 19px;
  flex: none;
  display: flex;
  align-items: center;
  background: #3c3c3c;
  color: #a8a8a8;
}
.coords {
  width: 298px;
  padding: 2px 0 0 2px;
  box-sizing: border-box;
  flex: none;
  font-size: 9.7px;
}
.st-icons {
  display: flex;
  align-items: center;
}
.st {
  width: 18.2px;
  height: 19px;
  display: flex;
  align-items: center;
  justify-content: center;
  flex: none;
}
.st.dark {
  background: #303030;
}
.st.txt {
  width: 20px;
  color: #8a8a8a;
  font-size: 9.5px;
}
.st svg {
  width: 15px;
  height: 15px;
}
.st .mini {
  width: 9px;
  height: 9px;
}
.st-right {
  margin-left: auto;
  display: flex;
  align-items: center;
  gap: 6.3px;
  padding-right: 1px;
}
.st-right svg {
  width: 12px;
  height: 12px;
}
.st-right span {
  color: #8e8e8e;
  font-size: 9.8px;
}
.st-right .resize {
  width: 10px;
  height: 10px;
  margin-left: 1px;
}

.logo {
  position: absolute;
  left: 5px;
  top: 2px;
  width: 33px;
  height: 33px;
  border-radius: 50%;
  background: #fff;
}
.edge-mark {
  position: absolute;
  left: 0;
  top: 352px;
  width: 1px;
  height: 11px;
  background: #222;
}
.callout {
  position: absolute;
  left: 0;
  top: 0;
  pointer-events: none;
}
</style>
